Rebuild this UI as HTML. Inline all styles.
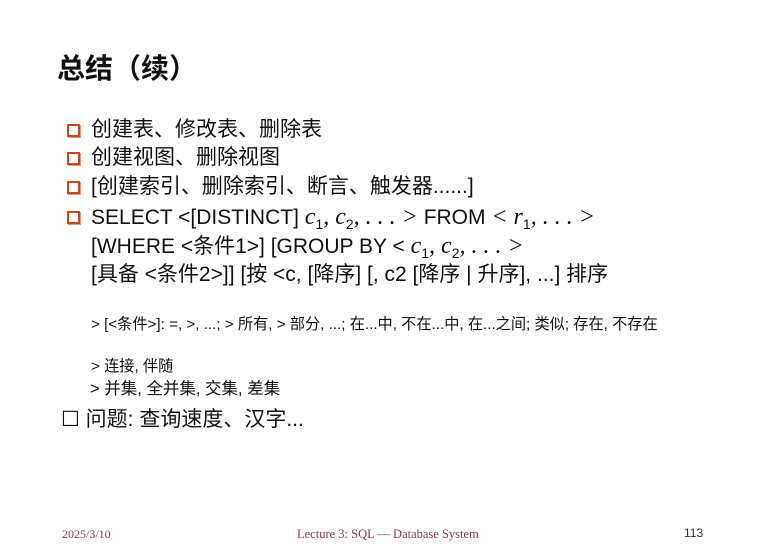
<!DOCTYPE html><html><head><meta charset="utf-8"><style>
body{margin:0;width:769px;height:549px;background:#fff;position:relative;overflow:hidden;font-family:"Liberation Sans","Noto Sans CJK SC",sans-serif;color:#111}
.a{position:absolute;white-space:nowrap;line-height:1}
.t{font-size:28px;font-weight:bold;left:57px;top:55px}
.l{font-size:21px;left:91px}
.b{position:absolute;left:67px;width:9px;height:9px;border:2px solid #c8461c;background:#fff;box-shadow:1px 1px 0 #e0a080}
.m{font-family:"Liberation Serif",serif;font-style:italic;font-size:24px}
sub{font-size:14px}
.s{font-size:15.2px;left:91px}
.f{font-family:"Liberation Serif",serif;font-size:12px;color:#8a3a50;top:528px}
</style></head><body>
<div class="a t">总结（续）</div>
<div class="b" style="top:124px"></div><div class="a l" style="top:119px">创建表、修改表、删除表</div>
<div class="b" style="top:152px"></div><div class="a l" style="top:147px">创建视图、删除视图</div>
<div class="b" style="top:181px"></div><div class="a l" style="top:176px">[创建索引、删除索引、断言、触发器......]</div>
<div class="b" style="top:211px"></div><div class="a l" style="top:205px">SELECT &lt;[DISTINCT] <span class="m">c</span><sub>1</sub><span class="m">, c</span><sub>2</sub><span class="m">, . . . &gt;</span> FROM <span class="m">&lt; r</span><sub>1</sub><span class="m">, . . . &gt;</span></div>
<div class="a l" style="top:234px">[WHERE &lt;条件1&gt;] [GROUP BY &lt; <span class="m">c</span><sub>1</sub><span class="m">, c</span><sub>2</sub><span class="m">, . . . &gt;</span></div>
<div class="a l" style="top:264px">[具备 &lt;条件2&gt;]] [按 &lt;c, [降序] [, c2 [降序 | 升序], ...] 排序</div>
<div class="a s" style="top:317px">&gt; [&lt;条件&gt;]: =, &gt;, ...; &gt; 所有, &gt; 部分, ...; 在...中, 不在...中, 在...之间; 类似; 存在, 不存在</div>
<div class="a s" style="top:359px">&gt; 连接, 伴随</div>
<div class="a" style="font-size:16.5px;left:90px;top:381px">&gt; 并集, 全并集, 交集, 差集</div>
<div class="a" style="font-size:21px;left:61px;top:409px">☐ 问题: 查询速度、汉字...</div>
<div class="a f" style="left:62px">2025/3/10</div>
<div class="a f" style="left:297px;font-size:12.5px">Lecture 3: SQL — Database System</div>
<div class="a" style="font-size:12px;left:684px;top:527px;color:#333">113</div>
</body></html>
